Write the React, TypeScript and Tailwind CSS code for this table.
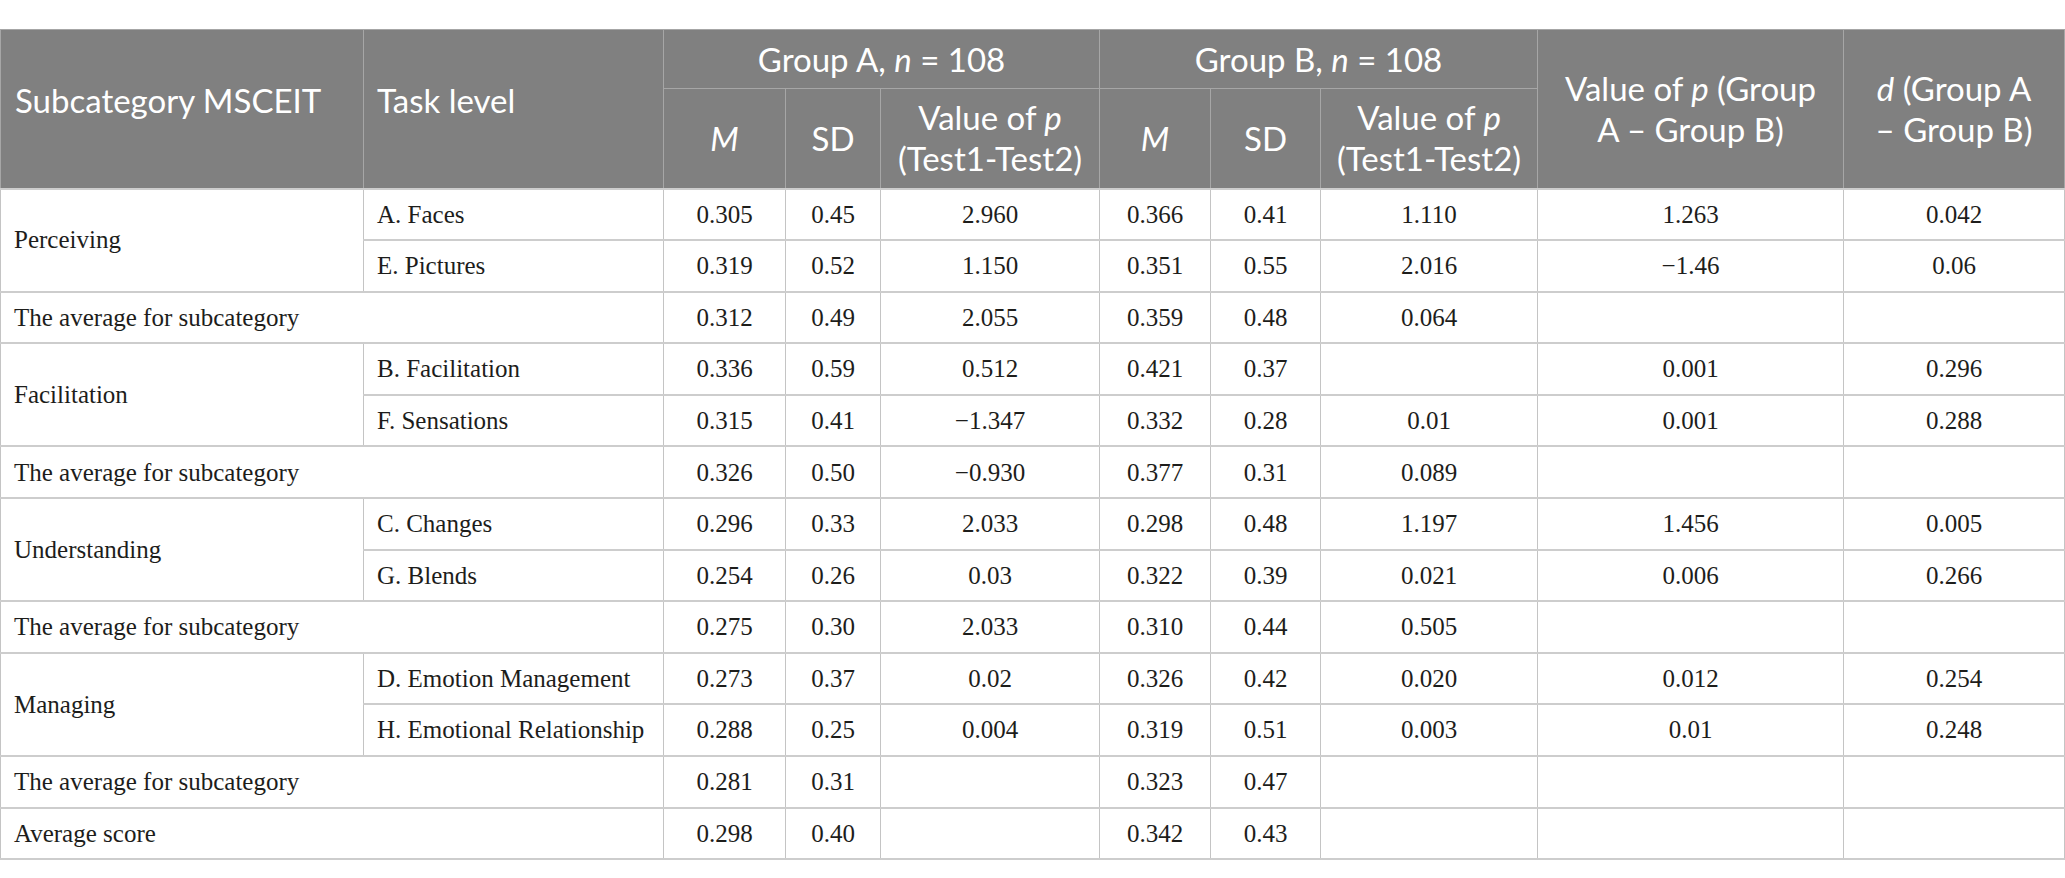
import React from 'react';

type Row = {
  group?: string;
  span?: number;
  task?: string;
  label?: string;
  v: string[];
};

const rows: Row[] = [
  { group: 'Perceiving', span: 2, task: 'A. Faces', v: ['0.305', '0.45', '2.960', '0.366', '0.41', '1.110', '1.263', '0.042'] },
  { task: 'E. Pictures', v: ['0.319', '0.52', '1.150', '0.351', '0.55', '2.016', '\u22121.46', '0.06'] },
  { label: 'The average for subcategory', v: ['0.312', '0.49', '2.055', '0.359', '0.48', '0.064', '', ''] },
  { group: 'Facilitation', span: 2, task: 'B. Facilitation', v: ['0.336', '0.59', '0.512', '0.421', '0.37', '', '0.001', '0.296'] },
  { task: 'F. Sensations', v: ['0.315', '0.41', '\u22121.347', '0.332', '0.28', '0.01', '0.001', '0.288'] },
  { label: 'The average for subcategory', v: ['0.326', '0.50', '\u22120.930', '0.377', '0.31', '0.089', '', ''] },
  { group: 'Understanding', span: 2, task: 'C. Changes', v: ['0.296', '0.33', '2.033', '0.298', '0.48', '1.197', '1.456', '0.005'] },
  { task: 'G. Blends', v: ['0.254', '0.26', '0.03', '0.322', '0.39', '0.021', '0.006', '0.266'] },
  { label: 'The average for subcategory', v: ['0.275', '0.30', '2.033', '0.310', '0.44', '0.505', '', ''] },
  { group: 'Managing', span: 2, task: 'D. Emotion Management', v: ['0.273', '0.37', '0.02', '0.326', '0.42', '0.020', '0.012', '0.254'] },
  { task: 'H. Emotional Relationship', v: ['0.288', '0.25', '0.004', '0.319', '0.51', '0.003', '0.01', '0.248'] },
  { label: 'The average for subcategory', v: ['0.281', '0.31', '', '0.323', '0.47', '', '', ''] },
  { label: 'Average score', v: ['0.298', '0.40', '', '0.342', '0.43', '', '', ''] },
];

const th =
  'border border-[#a6a6a6] bg-[#808080] text-white font-normal text-[33px] leading-[41px] align-middle whitespace-nowrap';
const td = 'border-x border-y-2 border-x-[#c4c4c4] border-y-[#cdcdcd] align-middle';

export default function App() {
  return (
    <div className="bg-white pt-[29px] w-[2065px] h-[878px] text-[#1d1d1b]">
      <table className="table-fixed border-collapse w-[2064px]">
        <colgroup>
          <col className="w-[363px]" />
          <col className="w-[300px]" />
          <col className="w-[122px]" />
          <col className="w-[95px]" />
          <col className="w-[219px]" />
          <col className="w-[111px]" />
          <col className="w-[110px]" />
          <col className="w-[217px]" />
          <col className="w-[306px]" />
          <col className="w-[221px]" />
        </colgroup>
        <thead className="font-['Lato',sans-serif]">
          <tr className="h-[59px]">
            <th rowSpan={2} className={`${th} text-left pl-[14px] pb-4`}>
              Subcategory MSCEIT
            </th>
            <th rowSpan={2} className={`${th} text-left pl-[13px] pb-4`}>
              Task level
            </th>
            <th colSpan={3} className={th}>
              Group A, <i>n</i> = 108
            </th>
            <th colSpan={3} className={th}>
              Group B, <i>n</i> = 108
            </th>
            <th rowSpan={2} className={th}>
              Value of <i>p</i> (Group
              <br />A – Group B)
            </th>
            <th rowSpan={2} className={th}>
              <i>d</i> (Group A
              <br />– Group B)
            </th>
          </tr>
          <tr className="h-[100px]">
            <th className={th}>
              <i>M</i>
            </th>
            <th className={th}>SD</th>
            <th className={th}>
              Value of <i>p</i>
              <br />
              (Test1-Test2)
            </th>
            <th className={th}>
              <i>M</i>
            </th>
            <th className={th}>SD</th>
            <th className={th}>
              Value of <i>p</i>
              <br />
              (Test1-Test2)
            </th>
          </tr>
        </thead>
        <tbody className="font-['Liberation_Serif',serif] text-[25px]">
          {rows.map((r, i) => (
            <tr key={i} className="h-[51.6px]">
              {r.label ? (
                <td colSpan={2} className={`${td} text-left pl-[13px]`}>
                  {r.label}
                </td>
              ) : (
                <>
                  {r.group && (
                    <td rowSpan={r.span} className={`${td} text-left pl-[13px]`}>
                      {r.group}
                    </td>
                  )}
                  <td className={`${td} text-left pl-[13px]`}>{r.task}</td>
                </>
              )}
              {r.v.map((c, j) => (
                <td key={j} className={`${td} text-center`}>
                  {c}
                </td>
              ))}
            </tr>
          ))}
        </tbody>
      </table>
    </div>
  );
}
